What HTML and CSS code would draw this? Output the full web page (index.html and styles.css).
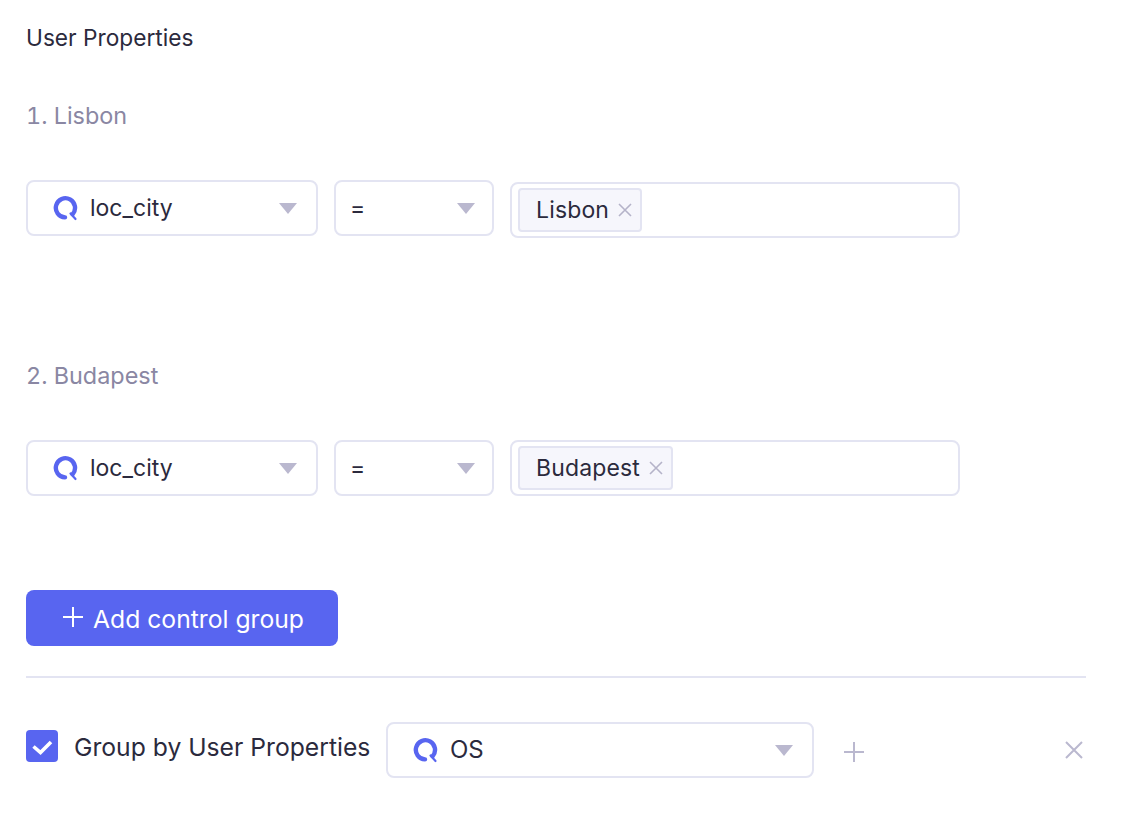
FILE: index.html
```html
<!DOCTYPE html>
<html lang="en">
<head>
<meta charset="utf-8">
<title>User Properties</title>
<link rel="stylesheet" href="styles.css">
</head>
<body>
<main class="panel">
  <h1 class="title">User Properties</h1>

  <section class="group group-first">
    <h2 class="group-name">1. Lisbon</h2>
    <div class="row">
      <div class="select select-prop">
        <svg class="q-icon" viewBox="0 0 26 26"><path d="M20.6 19.2A9.6 9.6 0 1 0 13 22.4" class="q-ring"/><path d="M18.5 18.5L23.5 24" class="q-tail"/></svg>
        <span class="select-text">loc_city</span>
        <span class="caret"></span>
      </div>
      <div class="select select-op">
        <span class="select-text">=</span>
        <span class="caret"></span>
      </div>
      <div class="tags tags-offset">
        <span class="tag">Lisbon<svg class="tag-x" viewBox="0 0 14 14"><path d="M1 1L13 13M13 1L1 13"/></svg></span>
      </div>
    </div>
  </section>

  <section class="group group-second">
    <h2 class="group-name">2. Budapest</h2>
    <div class="row">
      <div class="select select-prop">
        <svg class="q-icon" viewBox="0 0 26 26"><path d="M20.6 19.2A9.6 9.6 0 1 0 13 22.4" class="q-ring"/><path d="M18.5 18.5L23.5 24" class="q-tail"/></svg>
        <span class="select-text">loc_city</span>
        <span class="caret"></span>
      </div>
      <div class="select select-op">
        <span class="select-text">=</span>
        <span class="caret"></span>
      </div>
      <div class="tags">
        <span class="tag">Budapest<svg class="tag-x" viewBox="0 0 14 14"><path d="M1 1L13 13M13 1L1 13"/></svg></span>
      </div>
    </div>
  </section>

  <button class="add-btn" type="button">
    <svg class="add-icon" viewBox="0 0 20 20"><path d="M10 0V20M0 10H20"/></svg>
    Add control group
  </button>

  <hr class="divider">

  <div class="footer-row">
    <span class="check"><svg viewBox="0 0 32 32"><path d="M7.5 16.5L14.5 22.5L25 12"/></svg></span>
    <span class="check-label">Group by User Properties</span>
    <div class="select select-os">
      <svg class="q-icon" viewBox="0 0 26 26"><path d="M20.6 19.2A9.6 9.6 0 1 0 13 22.4" class="q-ring"/><path d="M18.5 18.5L23.5 24" class="q-tail"/></svg>
      <span class="select-text">OS</span>
      <span class="caret"></span>
    </div>
    <svg class="icon-plus" viewBox="0 0 20 20"><path d="M10 0V20M0 10H20"/></svg>
    <svg class="icon-close" viewBox="0 0 20 20"><path d="M2 2L18 18M18 2L2 18"/></svg>
  </div>
</main>
</body>
</html>
```

FILE: styles.css
```css
* { box-sizing: border-box; }
html, body { margin: 0; background: #fff; }
body {
  font-family: Inter, "Liberation Sans", sans-serif;
  color: #2b2a3d;
  width: 1122px;
  height: 816px;
  overflow: hidden;
}
.panel { width: 1086px; padding: 24px 0 0 26px; }
.title { margin: 0; font-size: 22.7px; line-height: 28px; font-weight: 400; }
.group-name { margin: 0; font-size: 23.4px; font-feature-settings: "tnum"; line-height: 28px; font-weight: 400; color: #8a87a3; }
.group-first { margin-top: 50px; }
.group-second { margin-top: 124px; }
.row { display: flex; align-items: flex-start; gap: 16px; margin-top: 50px; }
.select {
  display: flex;
  align-items: center;
  height: 56px;
  border: 2px solid #e3e4f2;
  border-radius: 8px;
  background: #fff;
  font-size: 23px;
}
.select-prop { width: 292px; padding: 0 19px 0 24px; }
.select-op { width: 160px; padding: 0 17px 0 14px; }
.select-os { width: 428px; padding: 0 19px 0 24px; font-size: 24px; }
.select-text { flex: 1; padding-left: 12px; line-height: 28px; }
.select-op .select-text { padding-left: 0; }
.q-icon { width: 26px; height: 26px; flex: none; fill: none; }
.q-ring { stroke: #5865f0; stroke-width: 4.4; stroke-linecap: round; }
.q-tail { stroke: #5865f0; stroke-width: 2.2; stroke-linecap: round; }
.caret {
  width: 0;
  height: 0;
  border-left: 9px solid transparent;
  border-right: 9px solid transparent;
  border-top: 11px solid #bab8cf;
}
.tags {
  display: flex;
  align-items: center;
  width: 450px;
  height: 56px;
  padding: 0 6px;
  border: 2px solid #e3e4f2;
  border-radius: 8px;
}
.tags-offset { margin-top: 2px; }
.tag {
  display: flex;
  align-items: center;
  height: 44px;
  padding: 0 8px 0 16px;
  border: 2px solid #e3e4f2;
  border-radius: 4px;
  background: #f6f6fc;
  font-size: 23px;
  letter-spacing: .15px;
}
.tag-x { width: 14px; height: 14px; margin-left: 9px; fill: none; stroke: #b5b3c9; stroke-width: 1.6; }
.add-btn {
  display: flex;
  align-items: center;
  justify-content: center;
  gap: 10px;
  width: 312px;
  height: 56px;
  margin-top: 94px;
  padding: 2px 0 0 3px;
  border: 0;
  border-radius: 8px;
  background: #5865f0;
  color: #fff;
  font: 400 24.7px Inter, "Liberation Sans", sans-serif;
}
.add-icon { width: 20px; height: 20px; margin-top: -4px; fill: none; stroke: #fff; stroke-width: 2; }
.divider { height: 2px; margin: 30px 0 0; border: 0; background: #e3e4f2; }
.footer-row { display: flex; align-items: center; margin-top: 44px; height: 56px; }
.check {
  display: flex;
  width: 32px;
  height: 32px;
  margin-top: -8px;
  border-radius: 4px;
  background: #5865f0;
  flex: none;
}
.check svg { width: 32px; height: 32px; fill: none; stroke: #fff; stroke-width: 3.6; }
.check-label { margin-left: 16px; font-size: 24.7px; width: 312px; margin-top: -6px; white-space: nowrap; }
.icon-plus { width: 20px; height: 20px; margin-left: 30px; margin-top: 4px; fill: none; stroke: #bab8cf; stroke-width: 2; }
.icon-close { width: 20px; height: 20px; margin-left: auto; margin-right: 2px; fill: none; stroke: #bab8cf; stroke-width: 2; }
```
